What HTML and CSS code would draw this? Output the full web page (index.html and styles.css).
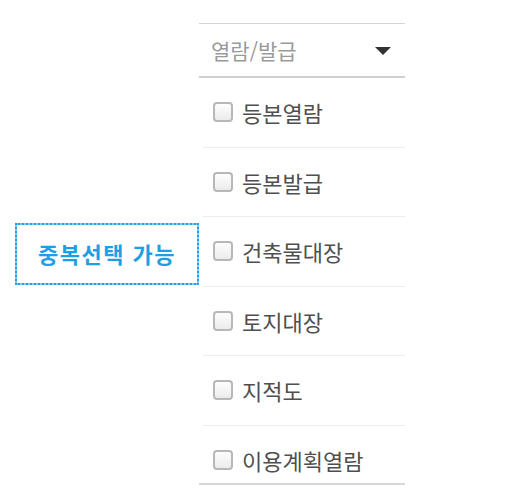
FILE: index.html
```html
<!DOCTYPE html>
<html lang="ko">
<head>
    <meta charset="UTF-8">
    <meta name="viewport" content="width=device-width, initial-scale=1.0">
    <title>열람/발급</title>
    <link rel="stylesheet" href="styles.css">
</head>
<body>
    <div class="page">
        <!-- Annotation -->
        <div class="note-col">
            <div class="note">중복선택 가능</div>
        </div>

        <!-- Dropdown panel -->
        <div class="panel">
            <div class="select">
                <span class="select-text">열람/발급</span>
                <span class="select-arrow"></span>
            </div>
            <div class="list">
                <label class="item"><span class="check"></span>등본열람</label>
                <label class="item"><span class="check"></span>등본발급</label>
                <label class="item"><span class="check"></span>건축물대장</label>
                <label class="item"><span class="check"></span>토지대장</label>
                <label class="item"><span class="check"></span>지적도</label>
                <label class="item"><span class="check"></span>이용계획열람</label>
            </div>
        </div>
    </div>
</body>
</html>
```

FILE: styles.css
```css
body {
    margin: 0;
    background-color: #fff;
    font-family: "Noto Sans CJK KR", "Noto Sans", sans-serif;
}
.page {
    display: flex;
    padding-top: 23px;
}
.note-col {
    width: 184px;
    padding-left: 15px;
    padding-top: 200px;
}
.note {
    box-sizing: border-box;
    width: 184px;
    height: 62px;
    border: 2px solid #7fcbf2;
    outline: 2px dotted #1f9fe6;
    outline-offset: -2px;
    display: flex;
    align-items: center;
    justify-content: center;
    color: #1e9fe4;
    font-size: 22px;
    font-weight: bold;
    letter-spacing: 1.5px;
    padding-bottom: 2px;
}
.panel {
    width: 206px;
}
.select {
    box-sizing: border-box;
    height: 55px;
    border-top: 1px solid #d4d4d4;
    border-bottom: 2px solid #d0d0d0;
    display: flex;
    align-items: center;
    justify-content: space-between;
    padding: 0 14px 0 12px;
}
.select-text {
    color: #9a9a9a;
    font-size: 21px;
}
.select-arrow {
    width: 0;
    height: 0;
    border-left: 8px solid transparent;
    border-right: 8px solid transparent;
    border-top: 8px solid #333;
    margin-top: 2px;
}
.list {
    box-sizing: border-box;
    height: 407px;
    overflow: hidden;
    border-bottom: 2px solid #d8d8d8;
}
.item {
    box-sizing: border-box;
    height: 69.5px;
    margin-left: 4px;
    border-bottom: 1px solid #ececec;
    display: flex;
    align-items: center;
    padding-left: 10px;
    color: #4f4f4f;
    font-size: 22px;
}
.check {
    box-sizing: border-box;
    width: 20px;
    height: 20px;
    border: 2px solid #b8b8b8;
    border-radius: 4px;
    background: linear-gradient(#fdfdfd, #ececec);
    margin-right: 9px;
    flex-shrink: 0;
}
```
